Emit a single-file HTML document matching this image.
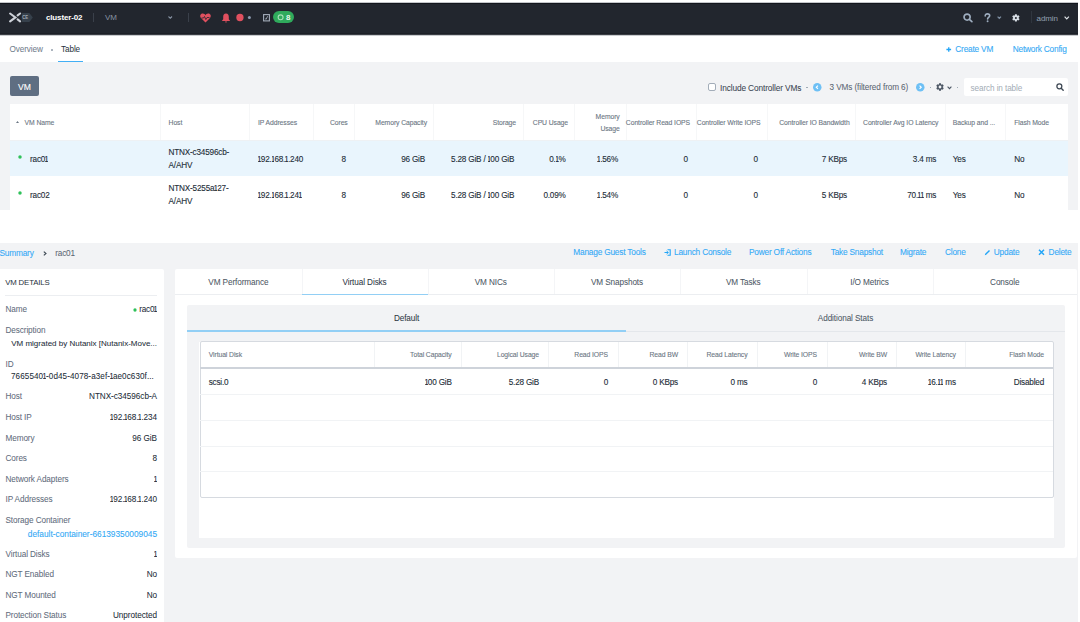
<!DOCTYPE html>
<html><head><meta charset="utf-8"><style>
*{box-sizing:border-box;margin:0;padding:0}
html,body{width:1080px;height:622px;overflow:hidden;background:#fff;font-family:"Liberation Sans",sans-serif;color:#232d38}
#w{position:absolute;left:0;top:0;width:1080px;height:622px;overflow:hidden}
.a{position:absolute}
.t{position:absolute;white-space:nowrap;line-height:12px;font-size:8px}
.r{text-align:right}
.c{text-align:center}
.v{color:#232d38;font-size:8.2px;letter-spacing:-0.2px;-webkit-text-stroke:0.1px #232d38}
.l{color:#5f6c7c;font-size:8.2px;letter-spacing:-0.1px;-webkit-text-stroke:0.05px #5f6c7c}
.h{color:#6b7683;font-size:6.8px;letter-spacing:-0.08px;-webkit-text-stroke:0.1px #6b7683}
.lk{color:#35aaf5;font-size:8.3px;letter-spacing:-0.2px;-webkit-text-stroke:0.1px #35aaf5}
.ip{}
.o{display:inline-block;width:2.8px;overflow:hidden;text-indent:-0.9px;vertical-align:top;height:12px}
svg{position:absolute;display:block;overflow:visible}
</style></head><body><div id="w">
<div class="a" style="left:0px;top:2px;width:1078px;height:1px;background:#c4c6ca;"></div>
<div class="a" style="left:0px;top:3px;width:1078px;height:1px;background:#13161d;"></div>
<div class="a" style="left:0px;top:4px;width:1078px;height:29px;background:#22262e;"></div>
<div class="a" style="left:0px;top:33px;width:1078px;height:1px;background:#1c1f26;"></div>
<div class="a" style="left:0px;top:34px;width:1078px;height:1px;background:#3a3d44;"></div>
<div class="a" style="left:0px;top:35px;width:1078px;height:1px;background:#c9cbce;"></div>
<svg style="left:0;top:0" width="40" height="34" viewBox="0 0 40 34">
  <path d="M10.1 13.5 L15.4 17.4 L10.1 21.3" stroke="#cdd1d8" stroke-width="2.1" fill="none" stroke-linecap="round" stroke-linejoin="miter"/>
  <path d="M20.1 13.5 L17.6 15.4 M20.1 21.3 L17.6 19.4" stroke="#cdd1d8" stroke-width="2.1" fill="none" stroke-linecap="round"/>
  <path d="M22.1 12.9 L29.4 12.9 L32.8 17.4 L29.4 21.9 L22.1 21.9 Q21.2 17.4 22.1 12.9 Z" fill="#36404b"/>
  <text x="22.3" y="19.3" font-size="4.7" textLength="5.9" lengthAdjust="spacingAndGlyphs" font-family="Liberation Sans" font-weight="700" fill="#a3abb5">CE</text>
</svg>
<div class="t " style="left:46.00px;top:12.00px;color:#fff;font-weight:700;font-size:8px;letter-spacing:-0.15px">cluster-02</div>
<div class="a" style="left:93px;top:13px;width:1px;height:9px;background:#3a404a;"></div>
<div class="t " style="left:105.00px;top:12.00px;color:#8793a3">VM</div>
<svg style="left:167.5px;top:16px" width="4.5" height="3" viewBox="0 0 4.5 3"><path d="M0.5 0.5 L2.25 2.3 L4 0.5" stroke="#8793a3" stroke-width="1.1" fill="none"/></svg>
<div class="a" style="left:188px;top:13px;width:1px;height:9px;background:#3a404a;"></div>
<svg style="left:200px;top:13px" width="11" height="10" viewBox="0 0 11 10">
  <path d="M5.5 9.5 L1 5 C-0.5 3.3 0.3 0.5 2.8 0.5 C4.2 0.5 5 1.4 5.5 2.2 C6 1.4 6.8 0.5 8.2 0.5 C10.7 0.5 11.5 3.3 10 5 Z" fill="#e0505f"/>
  <path d="M1.5 5 L3.5 5 L4.5 3.5 L5.8 6.5 L7 4.5 L9.5 4.5" stroke="#22262e" stroke-width="0.8" fill="none"/>
</svg>
<svg style="left:221px;top:13px" width="10" height="10" viewBox="0 0 10 10">
  <path d="M5 0.5 C3 0.5 2.2 2 2.2 4 L2.2 6.3 L0.8 8 L9.2 8 L7.8 6.3 L7.8 4 C7.8 2 7 0.5 5 0.5 Z" fill="#e0505f"/>
  <path d="M4 8.5 L6 8.5 L5.5 9.6 L4.5 9.6 Z" fill="#e0505f"/>
</svg>
<svg style="left:230px;top:10px" width="30" height="15" viewBox="230 10 30 15"><circle cx="239.95" cy="17.5" r="3.65" fill="#e0505f"/><circle cx="249.4" cy="17.6" r="1.5" fill="#8d9bb0"/></svg>
<svg style="left:263.2px;top:13.8px" width="7" height="7.5" viewBox="0 0 7 7.5">
  <rect x="0.6" y="0.6" width="5.8" height="6.3" fill="none" stroke="#a4adb9" stroke-width="1.1"/>
  <path d="M2.2 4.6 L3.1 5.4 M4.6 2.2 L3.1 5.4" stroke="#a4adb9" stroke-width="0.9" fill="none"/>
</svg>
<div class="a" style="left:272.8px;top:11.2px;width:21.6px;height:12.1px;background:#2faa5c;border-radius:6px"></div>
<svg style="left:275px;top:12px" width="12" height="11" viewBox="275 12 12 11"><circle cx="280.6" cy="17.3" r="2.45" fill="none" stroke="#a6dfb6" stroke-width="1.15"/></svg>
<div class="t " style="left:286.00px;top:11.50px;color:#e8f7ee;font-weight:700">8</div>
<svg style="left:963px;top:12.8px" width="10" height="9.5" viewBox="0 0 10 9.5">
  <circle cx="4.1" cy="4.1" r="3.05" stroke="#9eadbf" stroke-width="1.7" fill="none"/>
  <path d="M6.4 6.4 L8.9 8.7" stroke="#9eadbf" stroke-width="1.7" stroke-linecap="round"/>
</svg>
<svg style="left:983.5px;top:12.8px" width="7" height="9.5" viewBox="0 0 7 9.5">
  <path d="M1.2 2.9 C1.2 1.5 2.2 0.9 3.4 0.9 C4.8 0.9 5.7 1.7 5.7 2.8 C5.7 4.2 3.6 4.4 3.6 5.9" stroke="#9eadbf" stroke-width="1.6" fill="none" stroke-linecap="round"/>
  <circle cx="3.6" cy="8.2" r="0.95" fill="#9eadbf"/>
</svg>
<svg style="left:996.8px;top:15.8px" width="4.6" height="3" viewBox="0 0 4.6 3"><path d="M0.6 0.6 L2.3 2.3 L4 0.6" stroke="#7d8da0" stroke-width="1.3" fill="none"/></svg>
<svg style="left:1011.8px;top:13.6px" width="7.8" height="7.8" viewBox="0 0 10 10">
  <path d="M3.65 1.66 L3.81 0.25 L6.19 0.25 L6.35 1.66 L6.80 1.88 L7.22 2.16 L8.52 1.60 L9.71 3.65 L8.56 4.50 L8.60 5.00 L8.56 5.50 L9.71 6.35 L8.52 8.40 L7.22 7.84 L6.80 8.12 L6.35 8.34 L6.19 9.75 L3.81 9.75 L3.65 8.34 L3.20 8.12 L2.78 7.84 L1.48 8.40 L0.29 6.35 L1.44 5.50 L1.40 5.00 L1.44 4.50 L0.29 3.65 L1.48 1.60 L2.78 2.16 L3.20 1.88 Z" fill="#d8dee5"/><circle cx="5" cy="5" r="1.3" fill="#22262e"/></svg>
<div class="a" style="left:1030.5px;top:11px;width:1.2px;height:12.3px;background:#30363f;"></div>
<div class="t " style="left:1036.60px;top:12.70px;color:#93a0b0;letter-spacing:-0.1px">admin</div>
<svg style="left:1063.5px;top:16px" width="5.5" height="3.5" viewBox="0 0 5.5 3.5"><path d="M0.6 0.6 L2.75 2.8 L4.9 0.6" stroke="#dfe3e8" stroke-width="1.2" fill="none"/></svg>
<div class="t l" style="left:9.50px;top:44.00px;color:#75838f">Overview</div>
<svg style="left:47.10px;top:44.50px" width="10" height="10" viewBox="0 0 10 10"><circle cx="5" cy="5" r="0.95" fill="#8a96a4"/></svg>
<div class="t " style="left:61.00px;top:44.00px;font-size:8.2px;letter-spacing:-0.1px;color:#27313c">Table</div>
<div class="a" style="left:58px;top:61.3px;width:25px;height:2px;background:#42aff5;"></div>
<svg style="left:945.5px;top:46.7px" width="5.5" height="5" viewBox="0 0 5.5 5"><path d="M2.75 0.2 V4.8 M0.4 2.5 H5.1" stroke="#22a5f7" stroke-width="1.3"/></svg>
<div class="t lk" style="left:955.30px;top:43.00px;">Create VM</div>
<div class="t lk" style="left:1012.70px;top:43.00px;">Network Config</div>
<div class="a" style="left:0px;top:62px;width:1078px;height:148px;background:#f2f3f5;"></div>
<div class="a" style="left:10px;top:76px;width:29px;height:20px;background:#5f6e82;border-radius:2px"></div>
<div class="t c " style="left:-125.50px;width:300px;top:81.00px;color:#fff;font-size:8.6px;-webkit-text-stroke:0.1px #fff">VM</div>
<div class="a" style="left:708px;top:83px;width:7.5px;height:7.5px;background:#fff;border:1px solid #a3adb9;border-radius:2px"></div>
<div class="t v" style="left:720.00px;top:81.60px;font-size:8.3px;letter-spacing:-0.12px;color:#3b4652;-webkit-text-stroke:0.05px #3b4652">Include Controller VMs</div>
<div class="a" style="left:806px;top:86.5px;width:1.5px;height:1.5px;background:#a0aab5;"></div>
<svg style="left:813px;top:83px" width="8.5" height="8.5" viewBox="0 0 10 10"><circle cx="5" cy="5" r="5" fill="#6ec0f5"/><path d="M5.8 3 L3.8 5 L5.8 7" stroke="#fff" stroke-width="1.3" fill="none"/></svg>
<div class="t l" style="left:829.50px;top:82.00px;color:#5b6672">3 VMs (filtered from 6)</div>
<svg style="left:915.5px;top:83px" width="8.5" height="8.5" viewBox="0 0 10 10"><circle cx="5" cy="5" r="5" fill="#6ec0f5"/><path d="M4.2 3 L6.2 5 L4.2 7" stroke="#fff" stroke-width="1.3" fill="none"/></svg>
<div class="a" style="left:929.5px;top:86.5px;width:1.5px;height:1.5px;background:#a0aab5;"></div>
<svg style="left:936px;top:83px" width="8" height="8" viewBox="0 0 10 10"><path d="M3.65 1.66 L3.81 0.25 L6.19 0.25 L6.35 1.66 L6.80 1.88 L7.22 2.16 L8.52 1.60 L9.71 3.65 L8.56 4.50 L8.60 5.00 L8.56 5.50 L9.71 6.35 L8.52 8.40 L7.22 7.84 L6.80 8.12 L6.35 8.34 L6.19 9.75 L3.81 9.75 L3.65 8.34 L3.20 8.12 L2.78 7.84 L1.48 8.40 L0.29 6.35 L1.44 5.50 L1.40 5.00 L1.44 4.50 L0.29 3.65 L1.48 1.60 L2.78 2.16 L3.20 1.88 Z" fill="#4b5563"/><circle cx="5" cy="5" r="1.8" fill="#f2f3f5"/></svg>
<svg style="left:946.5px;top:86px" width="5" height="3.5" viewBox="0 0 5 3.5"><path d="M0.6 0.6 L2.5 2.6 L4.4 0.6" stroke="#4b5563" stroke-width="1.1" fill="none"/></svg>
<div class="a" style="left:956.5px;top:86.5px;width:1.5px;height:1.5px;background:#a0aab5;"></div>
<div class="a" style="left:963.5px;top:78px;width:104.5px;height:17.5px;background:#fff;border-radius:2px"></div>
<div class="t l" style="left:970.50px;top:83.00px;color:#a3acb6;-webkit-text-stroke:0">search in table</div>
<svg style="left:1055.5px;top:82.5px" width="8" height="8" viewBox="0 0 10 10">
  <circle cx="4.2" cy="4.2" r="3.1" stroke="#3d4753" stroke-width="1.6" fill="none"/>
  <path d="M6.5 6.5 L9 9" stroke="#3d4753" stroke-width="1.8" stroke-linecap="round"/></svg>
<div class="a" style="left:9.5px;top:104px;width:1058.8px;height:106px;background:#fff;"></div>
<div class="a" style="left:10px;top:140px;width:1058.3px;height:1px;background:#eef1f4;"></div>
<div class="a" style="left:10px;top:141px;width:1058.3px;height:35px;background:#e9f5fd;"></div>
<div class="a" style="left:160px;top:104px;width:1px;height:36px;background:#f6f7f8;"></div>
<div class="a" style="left:249px;top:104px;width:1px;height:36px;background:#f6f7f8;"></div>
<div class="a" style="left:313px;top:104px;width:1px;height:36px;background:#f6f7f8;"></div>
<div class="a" style="left:354px;top:104px;width:1px;height:36px;background:#f6f7f8;"></div>
<div class="a" style="left:433px;top:104px;width:1px;height:36px;background:#f6f7f8;"></div>
<div class="a" style="left:522.5px;top:104px;width:1px;height:36px;background:#f6f7f8;"></div>
<div class="a" style="left:574px;top:104px;width:1px;height:36px;background:#f6f7f8;"></div>
<div class="a" style="left:626px;top:104px;width:1px;height:36px;background:#f6f7f8;"></div>
<div class="a" style="left:696px;top:104px;width:1px;height:36px;background:#f6f7f8;"></div>
<div class="a" style="left:767px;top:104px;width:1px;height:36px;background:#f6f7f8;"></div>
<div class="a" style="left:855px;top:104px;width:1px;height:36px;background:#f6f7f8;"></div>
<div class="a" style="left:944.5px;top:104px;width:1px;height:36px;background:#f6f7f8;"></div>
<div class="a" style="left:1005px;top:104px;width:1px;height:36px;background:#f6f7f8;"></div>
<svg style="left:16px;top:121px" width="3" height="2" viewBox="0 0 3 2"><path d="M0 2 L1.5 0 L3 2Z" fill="#6b7683"/></svg>
<div class="t h" style="left:24.60px;top:116.50px;">VM Name</div>
<div class="t h" style="left:168.60px;top:116.50px;">Host</div>
<div class="t h" style="left:258.00px;top:116.50px;">IP Addresses</div>
<div class="t r h" style="left:47.70px;width:300px;top:116.50px;">Cores</div>
<div class="t r h" style="left:127.00px;width:300px;top:116.50px;">Memory Capacity</div>
<div class="t r h" style="left:216.00px;width:300px;top:116.50px;">Storage</div>
<div class="t r h" style="left:268.00px;width:300px;top:116.50px;">CPU Usage</div>
<div class="t r h" style="left:319.70px;width:300px;top:110.70px;">Memory</div>
<div class="t r h" style="left:319.70px;width:300px;top:122.90px;">Usage</div>
<div class="t r h" style="left:390.00px;width:300px;top:116.50px;">Controller Read IOPS</div>
<div class="t r h" style="left:460.40px;width:300px;top:116.50px;">Controller Write IOPS</div>
<div class="t r h" style="left:549.60px;width:300px;top:116.50px;">Controller IO Bandwidth</div>
<div class="t r h" style="left:638.40px;width:300px;top:116.50px;">Controller Avg IO Latency</div>
<div class="t h" style="left:952.80px;top:117.10px;">Backup and ...</div>
<div class="t h" style="left:1014.20px;top:116.50px;">Flash Mode</div>
<svg style="left:15.30px;top:152.00px" width="10" height="10" viewBox="0 0 10 10"><circle cx="5" cy="5" r="1.75" fill="#2fc15a"/></svg>
<div class="t v" style="left:30.00px;top:154.20px;">rac0<span class="o">1</span></div>
<div class="t v" style="left:168.60px;top:147.00px;">NTNX-c34596cb-</div>
<div class="t v" style="left:168.60px;top:160.40px;">A/AHV</div>
<div class="t v ip" style="left:258.00px;top:154.20px;"><span class="o">1</span>92.<span class="o">1</span>68.<span class="o">1</span>.240</div>
<div class="t r v" style="left:45.80px;width:300px;top:154.20px;">8</div>
<div class="t r v" style="left:125.00px;width:300px;top:154.20px;">96 GiB</div>
<div class="t r v" style="left:214.20px;width:300px;top:154.20px;">5.28 GiB / <span class="o">1</span>00 GiB</div>
<div class="t r v" style="left:265.60px;width:300px;top:154.20px;">0.<span class="o">1</span>%</div>
<div class="t r v" style="left:318.00px;width:300px;top:154.20px;"><span class="o">1</span>.56%</div>
<div class="t r v" style="left:387.80px;width:300px;top:154.20px;">0</div>
<div class="t r v" style="left:457.90px;width:300px;top:154.20px;">0</div>
<div class="t r v" style="left:547.00px;width:300px;top:154.20px;">7 KBps</div>
<div class="t r v" style="left:636.20px;width:300px;top:154.20px;">3.4 ms</div>
<div class="t v" style="left:952.80px;top:154.20px;">Yes</div>
<div class="t v" style="left:1014.20px;top:154.20px;">No</div>
<svg style="left:15.30px;top:187.90px" width="10" height="10" viewBox="0 0 10 10"><circle cx="5" cy="5" r="1.75" fill="#2fc15a"/></svg>
<div class="t v" style="left:30.00px;top:190.10px;">rac02</div>
<div class="t v" style="left:168.60px;top:182.90px;">NTNX-5255a<span class="o">1</span>27-</div>
<div class="t v" style="left:168.60px;top:196.30px;">A/AHV</div>
<div class="t v ip" style="left:258.00px;top:190.10px;"><span class="o">1</span>92.<span class="o">1</span>68.<span class="o">1</span>.24<span class="o">1</span></div>
<div class="t r v" style="left:45.80px;width:300px;top:190.10px;">8</div>
<div class="t r v" style="left:125.00px;width:300px;top:190.10px;">96 GiB</div>
<div class="t r v" style="left:214.20px;width:300px;top:190.10px;">5.28 GiB / <span class="o">1</span>00 GiB</div>
<div class="t r v" style="left:265.60px;width:300px;top:190.10px;">0.09%</div>
<div class="t r v" style="left:318.00px;width:300px;top:190.10px;"><span class="o">1</span>.54%</div>
<div class="t r v" style="left:387.80px;width:300px;top:190.10px;">0</div>
<div class="t r v" style="left:457.90px;width:300px;top:190.10px;">0</div>
<div class="t r v" style="left:547.00px;width:300px;top:190.10px;">5 KBps</div>
<div class="t r v" style="left:636.20px;width:300px;top:190.10px;">70.<span class="o">1</span><span class="o">1</span> ms</div>
<div class="t v" style="left:952.80px;top:190.10px;">Yes</div>
<div class="t v" style="left:1014.20px;top:190.10px;">No</div>
<div class="a" style="left:0px;top:243px;width:1078px;height:379px;background:#f2f3f5;"></div>
<div class="t lk" style="left:-0.50px;top:246.80px;">Summary</div>
<svg style="left:42.5px;top:250.5px" width="4" height="5" viewBox="0 0 4 5"><path d="M0.8 0.6 L3 2.5 L0.8 4.4" stroke="#3b4652" stroke-width="1.1" fill="none"/></svg>
<div class="t l" style="left:55.20px;top:247.60px;color:#5b6672;letter-spacing:-0.15px">rac01</div>
<div class="t lk" style="left:573.30px;top:245.80px;">Manage Guest Tools</div>
<svg style="left:663.5px;top:249px" width="7" height="7" viewBox="0 0 7 7"><path d="M3.5 0.7 L6.2 0.7 L6.2 6.3 L3.5 6.3" stroke="#22a5f7" stroke-width="1.1" fill="none"/><path d="M0.5 3.5 L4.3 3.5 M2.6 2 L4.3 3.5 L2.6 5" stroke="#22a5f7" stroke-width="1" fill="none"/></svg>
<div class="t lk" style="left:674.00px;top:245.80px;">Launch Console</div>
<div class="t lk" style="left:749.00px;top:245.80px;">Power Off Actions</div>
<div class="t lk" style="left:830.70px;top:245.80px;">Take Snapshot</div>
<div class="t lk" style="left:900.00px;top:245.80px;">Migrate</div>
<div class="t lk" style="left:945.00px;top:245.80px;">Clone</div>
<svg style="left:983.5px;top:249px" width="7" height="7" viewBox="0 0 7 7"><path d="M0.8 6.2 L1.2 4.8 L5 1 L6 2 L2.2 5.8 Z" fill="#22a5f7"/></svg>
<div class="t lk" style="left:993.80px;top:245.80px;">Update</div>
<svg style="left:1037.5px;top:249.3px" width="7" height="6.5" viewBox="0 0 7 6.5"><path d="M1 0.8 L6 5.7 M6 0.8 L1 5.7" stroke="#22a5f7" stroke-width="1.5" fill="none"/></svg>
<div class="t lk" style="left:1048.60px;top:245.80px;">Delete</div>
<div class="a" style="left:0px;top:269px;width:164px;height:353px;background:#fff;border-radius:0 2px 0 0"></div>
<div class="t " style="left:5.20px;top:277.20px;font-size:7.8px;letter-spacing:-0.15px;color:#27313c">VM DETAILS</div>
<div class="a" style="left:5px;top:295px;width:152px;height:1px;background:#eceef1;"></div>
<div class="t l" style="left:5.50px;top:304.20px;">Name</div>
<div class="t l" style="left:5.50px;top:391.00px;">Host</div>
<div class="t r v" style="left:-143.00px;width:300px;top:391.00px;font-size:8.2px;letter-spacing:-0.05px;-webkit-text-stroke:0.05px #232d38">NTNX-c34596cb-A</div>
<div class="t l" style="left:5.50px;top:411.60px;">Host IP</div>
<div class="t r v" style="left:-143.00px;width:300px;top:411.60px;font-size:8.2px;letter-spacing:-0.05px;-webkit-text-stroke:0.05px #232d38"><span class="o">1</span>92.<span class="o">1</span>68.<span class="o">1</span>.234</div>
<div class="t l" style="left:5.50px;top:432.50px;">Memory</div>
<div class="t r v" style="left:-143.00px;width:300px;top:432.50px;font-size:8.2px;letter-spacing:-0.05px;-webkit-text-stroke:0.05px #232d38">96 GiB</div>
<div class="t l" style="left:5.50px;top:453.20px;">Cores</div>
<div class="t r v" style="left:-143.00px;width:300px;top:453.20px;font-size:8.2px;letter-spacing:-0.05px;-webkit-text-stroke:0.05px #232d38">8</div>
<div class="t l" style="left:5.50px;top:473.60px;">Network Adapters</div>
<div class="t r v" style="left:-143.00px;width:300px;top:473.60px;font-size:8.2px;letter-spacing:-0.05px;-webkit-text-stroke:0.05px #232d38"><span class="o">1</span></div>
<div class="t l" style="left:5.50px;top:494.30px;">IP Addresses</div>
<div class="t r v" style="left:-143.00px;width:300px;top:494.30px;font-size:8.2px;letter-spacing:-0.05px;-webkit-text-stroke:0.05px #232d38"><span class="o">1</span>92.<span class="o">1</span>68.<span class="o">1</span>.240</div>
<div class="t l" style="left:5.50px;top:549.00px;">Virtual Disks</div>
<div class="t r v" style="left:-143.00px;width:300px;top:549.00px;font-size:8.2px;letter-spacing:-0.05px;-webkit-text-stroke:0.05px #232d38"><span class="o">1</span></div>
<div class="t l" style="left:5.50px;top:569.00px;">NGT Enabled</div>
<div class="t r v" style="left:-143.00px;width:300px;top:569.00px;font-size:8.2px;letter-spacing:-0.05px;-webkit-text-stroke:0.05px #232d38">No</div>
<div class="t l" style="left:5.50px;top:589.60px;">NGT Mounted</div>
<div class="t r v" style="left:-143.00px;width:300px;top:589.60px;font-size:8.2px;letter-spacing:-0.05px;-webkit-text-stroke:0.05px #232d38">No</div>
<div class="t l" style="left:5.50px;top:610.30px;">Protection Status</div>
<div class="t r v" style="left:-143.00px;width:300px;top:610.30px;font-size:8.2px;letter-spacing:-0.05px;-webkit-text-stroke:0.05px #232d38">Unprotected</div>
<div class="t r v" style="left:-143.00px;width:300px;top:304.20px;font-size:8.2px;letter-spacing:-0.05px;-webkit-text-stroke:0.05px #232d38;letter-spacing:-0.25px">rac0<span class="o">1</span></div>
<svg style="left:129.90px;top:304.70px" width="10" height="10" viewBox="0 0 10 10"><circle cx="5" cy="5" r="1.65" fill="#2fc15a"/></svg>
<div class="t l" style="left:5.50px;top:325.00px;">Description</div>
<div class="t v" style="left:11.20px;top:337.80px;font-size:8px;letter-spacing:0;-webkit-text-stroke:0.05px #232d38">VM migrated by Nutanix [Nutanix-Move...</div>
<div class="t l" style="left:5.50px;top:358.50px;">ID</div>
<div class="t v" style="left:11.00px;top:371.20px;font-size:8.15px;letter-spacing:0.08px;-webkit-text-stroke:0.05px #232d38">7665540<span class="o">1</span>-0d45-4078-a3ef-<span class="o">1</span>ae0c630f...</div>
<div class="t l" style="left:5.50px;top:515.30px;">Storage Container</div>
<div class="t r lk" style="left:-143.00px;width:300px;top:527.90px;font-size:8.3px;letter-spacing:0">default-container-66139350009045</div>
<div class="a" style="left:175px;top:269px;width:902px;height:288.6px;background:#fff;border-radius:2px"></div>
<div class="a" style="left:175px;top:294px;width:902px;height:1px;background:#eceef1;"></div>
<div class="t c l" style="left:88.35px;width:300px;top:276.90px;color:#4b5662">VM Performance</div>
<div class="a" style="left:301.7px;top:269px;width:1px;height:25px;background:#f4f5f7;"></div>
<div class="t c l" style="left:214.60px;width:300px;top:276.90px;color:#2a3440">Virtual Disks</div>
<div class="a" style="left:427.5px;top:269px;width:1px;height:25px;background:#f4f5f7;"></div>
<div class="t c l" style="left:340.75px;width:300px;top:276.90px;color:#4b5662">VM NICs</div>
<div class="a" style="left:554px;top:269px;width:1px;height:25px;background:#f4f5f7;"></div>
<div class="t c l" style="left:467.00px;width:300px;top:276.90px;color:#4b5662">VM Snapshots</div>
<div class="a" style="left:680px;top:269px;width:1px;height:25px;background:#f4f5f7;"></div>
<div class="t c l" style="left:593.25px;width:300px;top:276.90px;color:#4b5662">VM Tasks</div>
<div class="a" style="left:806.5px;top:269px;width:1px;height:25px;background:#f4f5f7;"></div>
<div class="t c l" style="left:719.50px;width:300px;top:276.90px;color:#4b5662">I/O Metrics</div>
<div class="a" style="left:932.5px;top:269px;width:1px;height:25px;background:#f4f5f7;"></div>
<div class="t c l" style="left:854.75px;width:300px;top:276.90px;color:#4b5662">Console</div>
<div class="a" style="left:301.7px;top:293.6px;width:126.3px;height:1.7px;background:#92cff5;"></div>
<div class="a" style="left:187px;top:305px;width:878px;height:243px;background:#f2f3f5;border-radius:2px"></div>
<div class="a" style="left:187px;top:330.5px;width:878px;height:1px;background:#e4e7eb;"></div>
<div class="a" style="left:187px;top:330px;width:439px;height:1.8px;background:#92cff5;"></div>
<div class="t c l" style="left:256.50px;width:300px;top:313.20px;color:#2a3440">Default</div>
<div class="t c l" style="left:695.50px;width:300px;top:313.20px;color:#4b5662">Additional Stats</div>
<div class="a" style="left:199px;top:342px;width:855px;height:196px;background:#fff;"></div>
<div class="a" style="left:199.5px;top:341px;width:854px;height:156.5px;background:transparent;border:1px solid #d6dae0;border-radius:2px"></div>
<div class="a" style="left:200px;top:367px;width:853px;height:2px;background:#ced3da;"></div>
<div class="a" style="left:200px;top:393.9px;width:853px;height:1px;background:#f1f3f5;"></div>
<div class="a" style="left:200px;top:420.3px;width:853px;height:1px;background:#f1f3f5;"></div>
<div class="a" style="left:200px;top:445.8px;width:853px;height:1px;background:#f1f3f5;"></div>
<div class="a" style="left:200px;top:471.4px;width:853px;height:1px;background:#f1f3f5;"></div>
<div class="a" style="left:374.2px;top:342px;width:1px;height:24.5px;background:#f1f3f5;"></div>
<div class="a" style="left:460.8px;top:342px;width:1px;height:24.5px;background:#f1f3f5;"></div>
<div class="a" style="left:548.3px;top:342px;width:1px;height:24.5px;background:#f1f3f5;"></div>
<div class="a" style="left:617.9px;top:342px;width:1px;height:24.5px;background:#f1f3f5;"></div>
<div class="a" style="left:687px;top:342px;width:1px;height:24.5px;background:#f1f3f5;"></div>
<div class="a" style="left:756.7px;top:342px;width:1px;height:24.5px;background:#f1f3f5;"></div>
<div class="a" style="left:826.7px;top:342px;width:1px;height:24.5px;background:#f1f3f5;"></div>
<div class="a" style="left:896px;top:342px;width:1px;height:24.5px;background:#f1f3f5;"></div>
<div class="a" style="left:965.4px;top:342px;width:1px;height:24.5px;background:#f1f3f5;"></div>
<div class="t h" style="left:208.70px;top:348.70px;">Virtual Disk</div>
<div class="t r h" style="left:151.70px;width:300px;top:348.70px;">Total Capacity</div>
<div class="t r h" style="left:239.00px;width:300px;top:348.70px;">Logical Usage</div>
<div class="t r h" style="left:308.00px;width:300px;top:348.70px;">Read IOPS</div>
<div class="t r h" style="left:378.00px;width:300px;top:348.70px;">Read BW</div>
<div class="t r h" style="left:447.50px;width:300px;top:348.70px;">Read Latency</div>
<div class="t r h" style="left:517.00px;width:300px;top:348.70px;">Write IOPS</div>
<div class="t r h" style="left:587.00px;width:300px;top:348.70px;">Write BW</div>
<div class="t r h" style="left:655.80px;width:300px;top:348.70px;">Write Latency</div>
<div class="t r h" style="left:744.00px;width:300px;top:348.70px;">Flash Mode</div>
<div class="t v" style="left:208.70px;top:376.60px;">scsi.0</div>
<div class="t r v" style="left:151.70px;width:300px;top:376.60px;"><span class="o">1</span>00 GiB</div>
<div class="t r v" style="left:239.00px;width:300px;top:376.60px;">5.28 GiB</div>
<div class="t r v" style="left:308.00px;width:300px;top:376.60px;">0</div>
<div class="t r v" style="left:378.00px;width:300px;top:376.60px;">0 KBps</div>
<div class="t r v" style="left:447.50px;width:300px;top:376.60px;">0 ms</div>
<div class="t r v" style="left:517.00px;width:300px;top:376.60px;">0</div>
<div class="t r v" style="left:587.00px;width:300px;top:376.60px;">4 KBps</div>
<div class="t r v" style="left:655.80px;width:300px;top:376.60px;"><span class="o">1</span>6.<span class="o">1</span><span class="o">1</span> ms</div>
<div class="t r v" style="left:744.00px;width:300px;top:376.60px;">Disabled</div>
</div></body></html>
